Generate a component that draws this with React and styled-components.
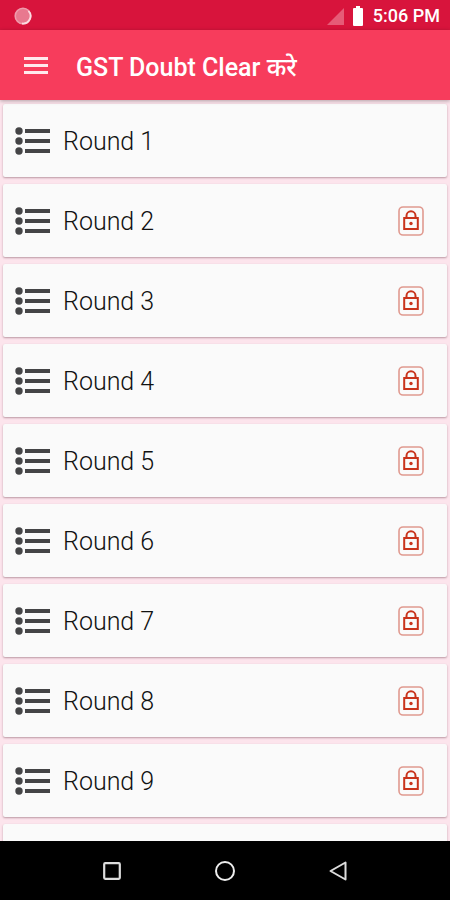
import React, { useState } from 'react';
import styled, { createGlobalStyle } from 'styled-components';

const GlobalStyle = createGlobalStyle`
  * {
    box-sizing: border-box;
  }
  body {
    margin: 0;
    background-color: #fce4ec;
    font-family: Roboto, 'Noto Sans', 'Noto Sans Devanagari', sans-serif;
  }
  button {
    margin: 0;
    padding: 0;
    border: 0;
    background: none;
    font-family: inherit;
    cursor: pointer;
  }
  svg {
    display: block;
  }
`;

const Screen = styled.div`
  display: flex;
  flex-direction: column;
  height: 100vh;
`;

const StatusBar = styled.div`
  display: flex;
  flex: none;
  align-items: center;
  justify-content: space-between;
  height: 30px;
  padding: 2px 10px 0 14px;
  background-color: #d8143c;
  color: #fff;
`;

const StatusIcons = styled.div`
  display: flex;
  align-items: center;
  gap: 8px;
`;

const Clock = styled.span`
  font-size: 18px;
  line-height: 24px;
  font-weight: 500;
`;

const Header = styled.header`
  display: flex;
  flex: none;
  align-items: center;
  gap: 28px;
  height: 70px;
  padding: 6px 24px 0;
  background-color: #f73c5c;
  box-shadow: 0 1px 4px rgba(0, 0, 0, 0.3);
  color: #fff;
  z-index: 1;
`;

const MenuButton = styled.button`
  padding-bottom: 6px;
`;

const Title = styled.h1`
  margin: 0;
  font-size: 25px;
  line-height: 32px;
  font-weight: 500;
  white-space: nowrap;
`;

const RoundList = styled.ul`
  display: flex;
  flex: 1;
  flex-direction: column;
  gap: 7px;
  min-height: 0;
  margin: 0;
  padding: 4px 3px 4px;
  overflow-y: auto;
  scrollbar-width: none;
  list-style: none;
`;

const RoundCard = styled.li`
  flex: none;
  border-radius: 2px;
  background-color: #fafafa;
  box-shadow: 0 1px 2px rgba(90, 40, 55, 0.4);
`;

const RoundButton = styled.button`
  display: flex;
  align-items: center;
  gap: 12px;
  width: 100%;
  height: 73px;
  padding: 0 23px 0 12px;
  color: #111;
  text-align: left;
`;

const RoundName = styled.span`
  flex: 1;
  padding-top: 3px;
  font-size: 25px;
  line-height: 32px;
  font-weight: 300;
`;

const NavBar = styled.nav`
  display: flex;
  flex: none;
  align-items: center;
  justify-content: space-around;
  height: 59px;
  padding: 0 56px;
  background-color: #000;
  z-index: 1;
`;

const rounds = [1, 2, 3, 4, 5, 6, 7, 8, 9, 10];

const ListIcon = () => (
  <svg width="36" height="28" viewBox="0 0 36 28" fill="#444446" aria-hidden="true">
    {[4, 14, 24].map((y) => (
      <g key={y}>
        <circle cx="4" cy={y} r="3.7" />
        <rect x="10" y={y - 2} width="25" height="4" />
      </g>
    ))}
  </svg>
);

const LockIcon = () => (
  <svg width="26" height="30" viewBox="0 0 26 30" fill="none" aria-hidden="true">
    <rect x="1" y="1" width="24" height="28" rx="4" stroke="#e09a90" strokeWidth="1.6" />
    <path d="M8.5 12V9.8a4.5 4.5 0 0 1 9 0V12" stroke="#c9331c" strokeWidth="2" />
    <rect x="6.2" y="12" width="13.6" height="11" stroke="#c9331c" strokeWidth="2" />
    <circle cx="13" cy="17.5" r="1.7" fill="#c9331c" />
  </svg>
);

export default function App() {
  const [selected, setSelected] = useState(null);

  return (
    <Screen>
      <GlobalStyle />
      <StatusBar>
        <svg width="18" height="18" viewBox="0 0 18 18" aria-hidden="true">
          <circle cx="9" cy="9" r="7.8" fill="#e8798f" stroke="#ef9bac" strokeWidth="1.6" />
          <path d="M14.5 4A7.5 7.5 0 0 1 8 16.5" fill="none" stroke="#fbdbe1" strokeWidth="1.8" />
        </svg>
        <StatusIcons>
          <svg width="17" height="18" viewBox="0 0 17 18" aria-hidden="true">
            <path d="M17 1v17H0z" fill="#e65b77" />
          </svg>
          <svg width="13" height="20" viewBox="0 0 13 20" fill="#fff" aria-hidden="true">
            <path d="M4 0h4v2h2a1 1 0 0 1 1 1v16a1 1 0 0 1-1 1H2a1 1 0 0 1-1-1V3a1 1 0 0 1 1-1h2z" />
          </svg>
          <Clock>5:06 PM</Clock>
        </StatusIcons>
      </StatusBar>
      <Header>
        <MenuButton type="button" aria-label="Menu">
          <svg width="24" height="18" viewBox="0 0 24 18" fill="#ffe9ed">
            <path d="M0 1h24v3H0zM0 8h24v3H0zM0 15h24v3H0z" />
          </svg>
        </MenuButton>
        <Title>GST Doubt Clear करे</Title>
      </Header>
      <RoundList>
        {rounds.map((round) => (
          <RoundCard key={round}>
            <RoundButton
              type="button"
              aria-pressed={selected === round}
              onClick={() => setSelected(round)}
            >
              <ListIcon />
              <RoundName>Round {round}</RoundName>
              {round > 1 && <LockIcon />}
            </RoundButton>
          </RoundCard>
        ))}
      </RoundList>
      <NavBar>
        <button type="button" aria-label="Recent apps">
          <svg width="20" height="20" viewBox="0 0 20 20" fill="none" stroke="#ddd" strokeWidth="2.2">
            <rect x="2.2" y="2.2" width="15.6" height="15.6" rx="1" />
          </svg>
        </button>
        <button type="button" aria-label="Home">
          <svg width="20" height="20" viewBox="0 0 20 20" fill="none" stroke="#eee" strokeWidth="2">
            <circle cx="10" cy="10" r="9" />
          </svg>
        </button>
        <button type="button" aria-label="Back">
          <svg width="20" height="20" viewBox="0 0 20 20" fill="none" stroke="#ddd" strokeWidth="2">
            <path d="M17.5 1.5v17L2.5 10z" strokeLinejoin="round" />
          </svg>
        </button>
      </NavBar>
    </Screen>
  );
}
